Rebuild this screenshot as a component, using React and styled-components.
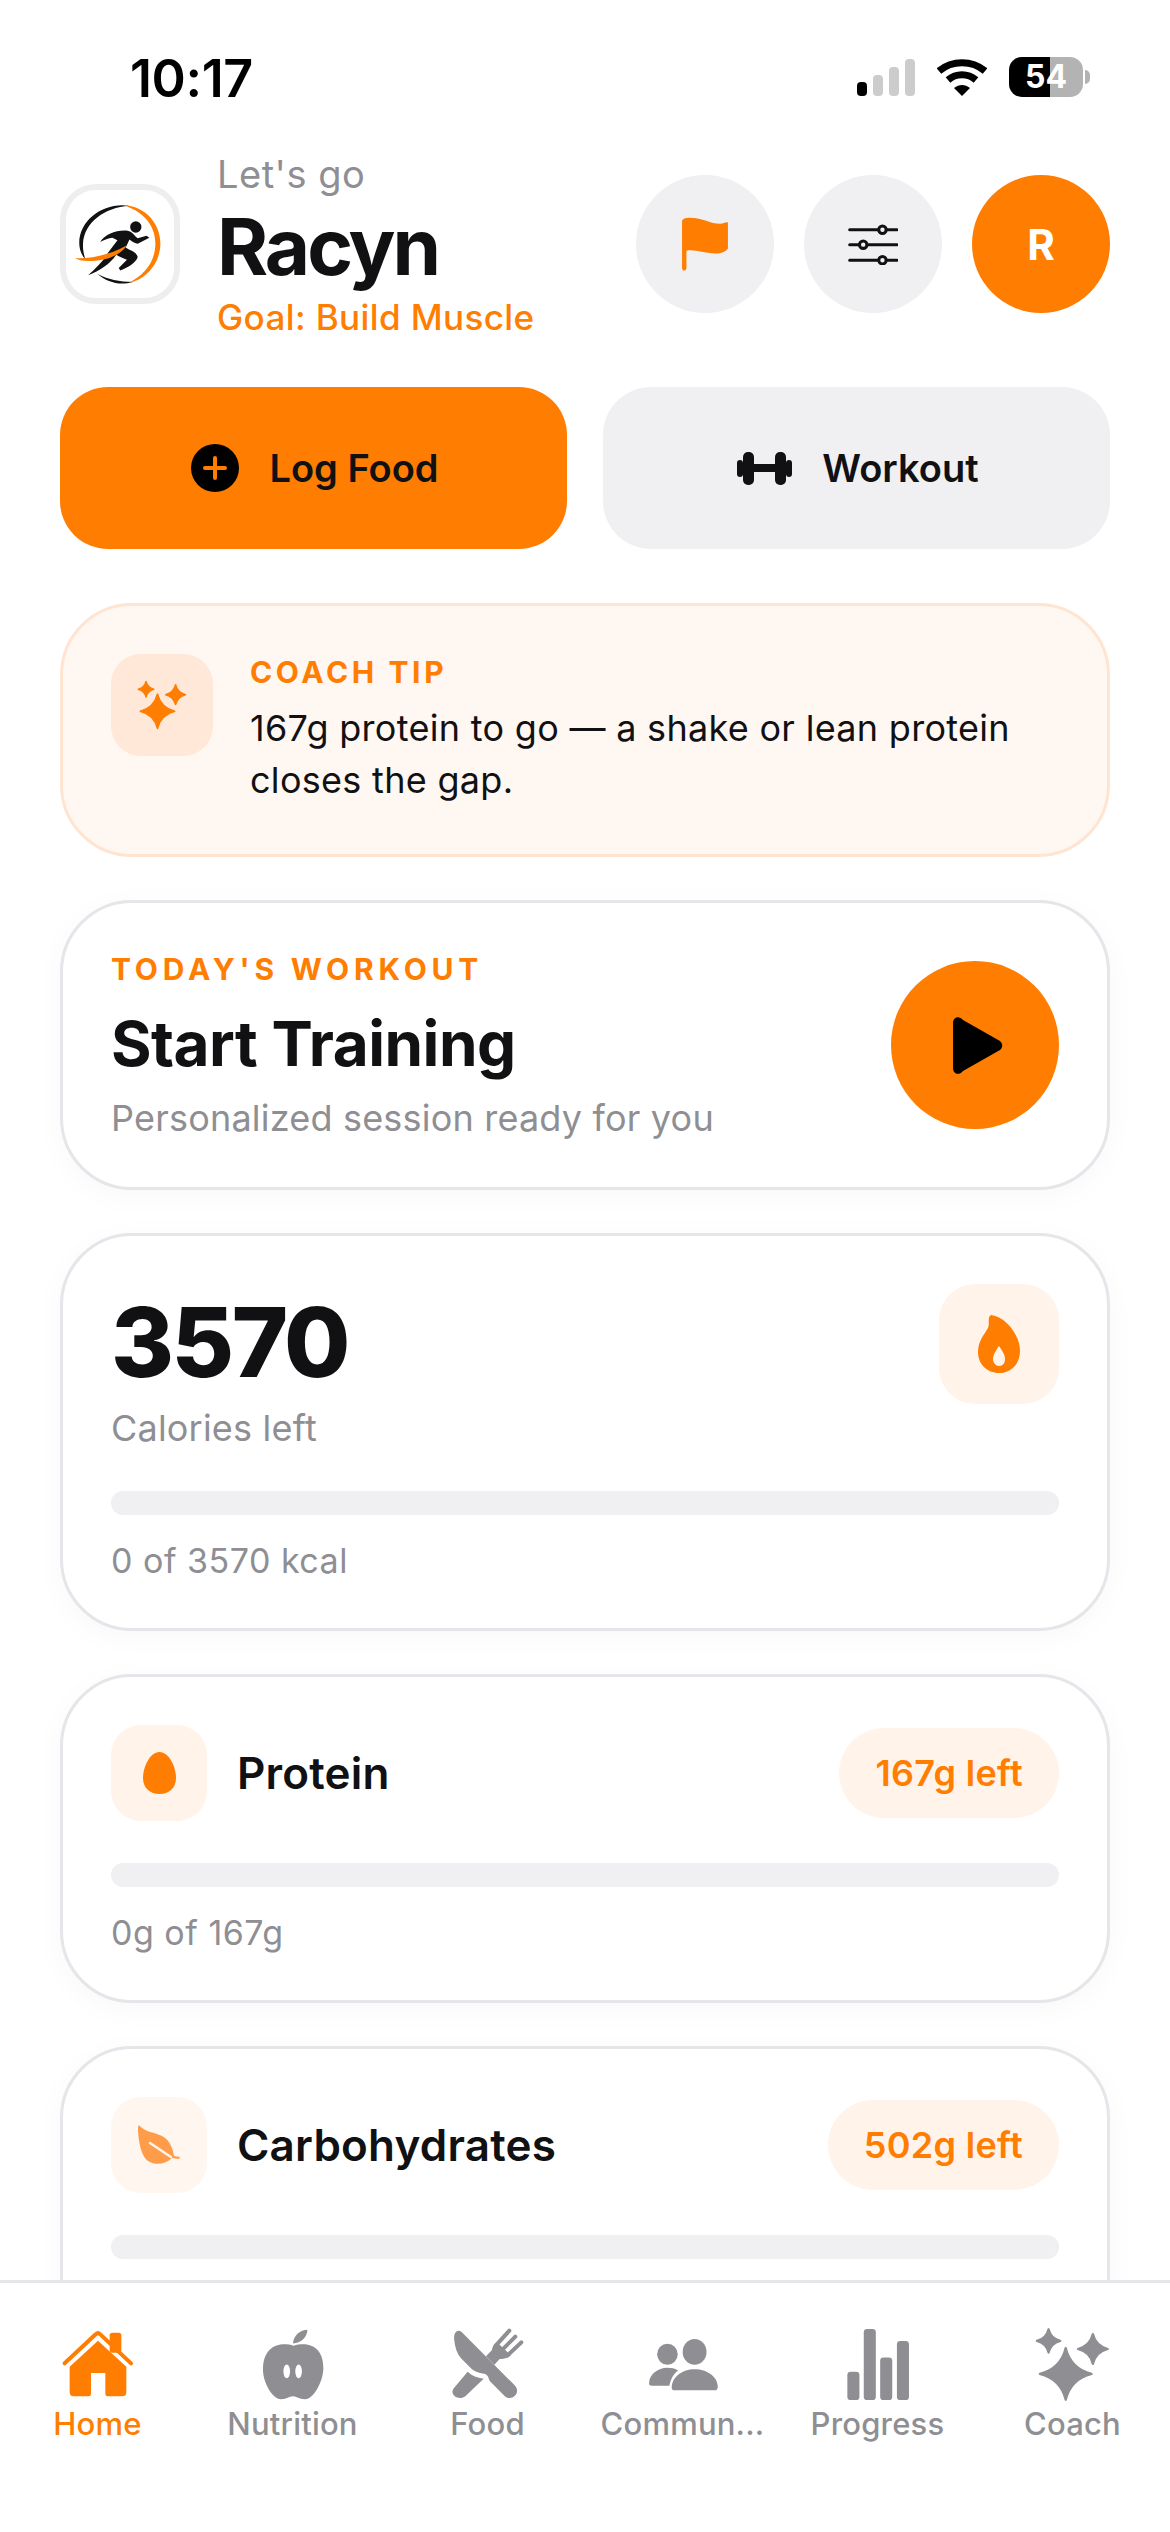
import React from 'react';
import styled, { createGlobalStyle } from 'styled-components';

const ORANGE = '#ff7d00';
const INK = '#111114';
const GRAY = '#8e8e93';
const FILL = '#f0f0f2';

const GlobalStyle = createGlobalStyle`
  html, body {
    margin: 0;
    padding: 0;
    background: #fff;
  }
  * {
    box-sizing: border-box;
  }
  body {
    font-family: Inter, "Liberation Sans", sans-serif;
    color: ${INK};
  }
`;

// four pointed star used by the coach sparkles
const star = (x, y, r) => {
  const k = r * 0.2;
  return `M${x} ${y - r}Q${x + k} ${y - k} ${x + r} ${y}Q${x + k} ${y + k} ${x} ${y + r}Q${x - k} ${y + k} ${x - r} ${y}Q${x - k} ${y - k} ${x} ${y - r}Z`;
};

function Sparkles({ size, color }) {
  return (
    <svg width={size} height={size} viewBox="1242 42 230 232" fill={color} stroke={color} strokeWidth="7" strokeLinejoin="round">
      <path d={star(1283, 85, 36)} />
      <path d={star(1420, 110, 46)} />
      <path d={star(1336, 187, 80)} />
    </svg>
  );
}

function HomeIcon() {
  return (
    <svg width="72" height="70" viewBox="95 55 216 210" fill={ORANGE}>
      <rect x="238" y="66" width="35" height="60" rx="8" />
      <path d="M103 158L196 71Q203 64 210 71L302 158" fill="none" stroke={ORANGE} strokeWidth="12" strokeLinecap="round" />
      <path d="M203 90L288 168V245Q288 257 276 257H232Q225 257 225 250V187H182V250Q182 257 175 257H130Q118 257 118 245V168Z" />
    </svg>
  );
}

function AppleIcon() {
  return (
    <svg width="62" height="73" viewBox="694 50 188 218" fill={GRAY}>
      <path d="M788 95C790 70 810 55 832 54C830 78 812 95 788 95Z" />
      <path d="M790 102C750 90 700 100 697 170C695 210 725 264 752 264C770 264 775 255 788 255C800 255 805 264 825 264C850 264 880 210 880 170C880 100 830 90 790 102Z" />
      <ellipse cx="769" cy="180" rx="10" ry="21" fill="#fff" />
      <ellipse cx="805" cy="180" rx="10" ry="21" fill="#fff" />
    </svg>
  );
}

function FoodIcon() {
  return (
    <svg width="72" height="72" viewBox="1265 52 216 216" fill={GRAY}>
      <path d="M1272 90C1268 68 1280 52 1294 64L1455 226C1472 248 1445 272 1425 258L1382 215C1372 205 1378 195 1362 189C1350 188 1338 186 1325 176L1292 143C1280 128 1274 110 1272 90Z" />
      <path d="M1271 232L1312 183C1325 195 1340 201 1360 204L1305 257C1285 272 1255 252 1271 232Z" />
      <path d="M1367 137L1385 118C1387 105 1392 100 1400 95L1442 134C1430 143 1420 146 1408 145L1392 162Z" />
      <path d="M1397 104L1437 60M1414 119L1455 78M1431 135L1473 95" fill="none" stroke={GRAY} strokeWidth="12" strokeLinecap="round" />
    </svg>
  );
}

function PeopleIcon() {
  return (
    <svg width="72" height="53" viewBox="80 78 214 160" fill={GRAY}>
      <ellipse cx="140" cy="127" rx="31" ry="32" />
      <ellipse cx="222" cy="120" rx="36" ry="39" />
      <path d="M85 212C85 190 110 168 140 168C150 168 165 170 172 176C160 185 150 200 146 222H95Q82 222 85 212Z" />
      <path d="M153 225C155 195 185 172 222 172C260 172 292 195 292 225Q292 236 282 236H162Q152 236 153 225Z" />
    </svg>
  );
}

function BarsIcon() {
  return (
    <svg width="62" height="71" viewBox="680 52 185 212" fill={GRAY}>
      <rect x="681" y="180" width="36" height="84" rx="10" />
      <rect x="730" y="52" width="36" height="212" rx="10" />
      <rect x="779" y="137" width="36" height="127" rx="10" />
      <rect x="829" y="88" width="36" height="176" rx="10" />
    </svg>
  );
}

function FlagIcon() {
  return (
    <svg width="46" height="54" viewBox="127 112 136 160" fill={ORANGE}>
      <path d="M127 125C127 118 135 114 150 114C190 114 210 132 240 132C250 132 257 125 263 128V205C255 215 245 220 225 220C190 220 165 207 140 212V265Q133 276 127 265Z" />
    </svg>
  );
}

function SlidersIcon() {
  return (
    <svg width="50" height="42" viewBox="625 128 148 124" fill="none" stroke={INK} strokeWidth="9" strokeLinecap="round">
      <path d="M630 148H770M630 192H770M630 238H770" />
      <circle cx="727" cy="148" r="11" fill={FILL} />
      <circle cx="670" cy="192" r="11" fill={FILL} />
      <circle cx="727" cy="238" r="11" fill={FILL} />
    </svg>
  );
}

function PlusBadge() {
  return (
    <svg width="48" height="48" viewBox="0 0 48 48">
      <circle cx="24" cy="24" r="24" fill="#000" />
      <path d="M24 14V34M14 24H34" stroke={ORANGE} strokeWidth="4" strokeLinecap="round" />
    </svg>
  );
}

function DumbbellIcon() {
  return (
    <svg width="55" height="33" viewBox="0 0 55 33" fill={INK}>
      <rect x="0" y="8" width="6" height="17" rx="3" />
      <rect x="6" y="0" width="11" height="33" rx="5" />
      <rect x="16" y="12" width="23" height="8" />
      <rect x="38" y="0" width="11" height="33" rx="5" />
      <rect x="49" y="8" width="6" height="17" rx="3" />
    </svg>
  );
}

function PlayIcon() {
  return (
    <svg width="50" height="57" viewBox="0 0 50 57" fill="#000">
      <path d="M0 6C0 0 6 -2 10 3L47 24C50 27 50 30 47 33L10 54C6 59 0 57 0 51Z" />
    </svg>
  );
}

function FlameIcon() {
  return (
    <svg width="42" height="58" viewBox="0 0 42 58">
      <path
        fillRule="evenodd"
        fill={ORANGE}
        d="M13 0C28 2 42 20 42 36C42 49 33 58 21 58C9 58 0 49 0 37C0 26 6 20 10 13C12 9 9 2 13 0ZM21 31C17 37 15 40 15 44C15 48 18 51 21 51C25 51 27 48 27 44C27 40 25 37 21 31Z"
      />
    </svg>
  );
}

function EggIcon() {
  return (
    <svg width="33" height="42" viewBox="0 0 33 42" fill={ORANGE}>
      <path d="M16.5 0C26 0 33 15 33 26C33 36 26 42 16.5 42C7 42 0 36 0 26C0 15 7 0 16.5 0Z" />
    </svg>
  );
}

function LeafIcon() {
  return (
    <svg width="42" height="40" viewBox="0 0 42 40" fill="#ff9c4a">
      <path d="M1 0C6 7 16 7 24 11C32 15 35 24 36 31L42 32L41 34L34 33C28 39 18 41 10 36C2 30 0 12 0 2Z" />
      <path d="M12 18L33 32" fill="none" stroke="#fff6f0" strokeWidth="2.4" strokeLinecap="round" />
    </svg>
  );
}

function RunnerLogo() {
  return (
    <svg width="108" height="108" viewBox="69 81 342 342">
      <path fill={INK} d="M270 131C190 118 110 175 111 250C111 265 116 285 130 300C124 280 122 265 123 250C127 185 190 136 270 131Z" />
      <path fill={INK} d="M168 346C200 374 240 384 280 372C240 372 200 364 168 346Z" />
      <path fill={ORANGE} d="M250 129C322 130 368 190 368 250C368 312 322 366 268 375C316 350 352 310 352 250C352 190 310 146 250 129Z" />
      <circle cx="290" cy="198" r="18" fill={INK} />
      <path fill={INK} d="M177 246C195 220 228 207 264 210C278 212 286 226 296 234L324 226L333 232L296 251C284 250 277 242 270 238L258 264C272 272 290 276 296 292C294 308 266 326 241 336L236 328L262 302C252 298 238 292 228 286C208 316 176 336 139 351C162 330 186 308 202 280L232 240L216 232C204 234 190 238 177 246Z" />
      <path fill={ORANGE} d="M97 297C150 300 210 285 262 256C236 296 180 306 140 306C120 306 106 302 97 297Z" />
    </svg>
  );
}

const TABS = [
  { label: 'Home', icon: <HomeIcon />, active: true },
  { label: 'Nutrition', icon: <AppleIcon /> },
  { label: 'Food', icon: <FoodIcon /> },
  { label: 'Commun...', icon: <PeopleIcon /> },
  { label: 'Progress', icon: <BarsIcon /> },
  { label: 'Coach', icon: <Sparkles size={75} color={GRAY} /> },
];

const MACROS = [
  { name: 'Protein', left: '167g left', note: '0g of 167g', icon: <EggIcon /> },
  { name: 'Carbohydrates', left: '502g left', note: '0g of 502g', icon: <LeafIcon />, soft: true },
];

export default function App() {
  return (
    <>
      <GlobalStyle />
      <Page>
        <StatusBar>
          <Clock>10:17</Clock>
          <StatusIcons>
            <SignalBars>
              <SignalBar $height={14} $on />
              <SignalBar $height={21} />
              <SignalBar $height={29} />
              <SignalBar $height={37} />
            </SignalBars>
            <svg width="50" height="37" viewBox="0 0 50 37" fill="none" stroke="#000" strokeWidth="7">
              <path d="M2 12C15 1 35 1 48 12" />
              <path d="M11 21C19 14 31 14 39 21" />
              <path d="M17 29L25 37L33 29C28 25 22 25 17 29Z" fill="#000" stroke="none" />
            </svg>
            <Battery>
              <BatteryLevel>54</BatteryLevel>
              <BatteryTip />
            </Battery>
          </StatusIcons>
        </StatusBar>

        <Scroll>
          <Header>
            <LogoTile>
              <RunnerLogo />
            </LogoTile>
            <Greeting>
              <Hello>Let's go</Hello>
              <UserName>Racyn</UserName>
              <Goal>Goal: Build Muscle</Goal>
            </Greeting>
            <HeaderActions>
              <RoundButton><FlagIcon /></RoundButton>
              <RoundButton><SlidersIcon /></RoundButton>
              <RoundButton $primary>R</RoundButton>
            </HeaderActions>
          </Header>

          <QuickActions>
            <QuickButton $primary><PlusBadge />Log Food</QuickButton>
            <QuickButton><DumbbellIcon />Workout</QuickButton>
          </QuickActions>

          <TipCard>
            <TipIcon>
              <Sparkles size={50} color={ORANGE} />
            </TipIcon>
            <div>
              <Eyebrow $spacing={3.6}>COACH TIP</Eyebrow>
              <TipText>167g protein to go — a shake or lean protein closes the gap.</TipText>
            </div>
          </TipCard>

          <WorkoutCard>
            <div>
              <Eyebrow $spacing={4.8}>TODAY'S WORKOUT</Eyebrow>
              <WorkoutTitle>Start Training</WorkoutTitle>
              <WorkoutNote>Personalized session ready for you</WorkoutNote>
            </div>
            <PlayButton><PlayIcon /></PlayButton>
          </WorkoutCard>

          <CaloriesCard>
            <CaloriesTop>
              <div>
                <CaloriesValue>3570</CaloriesValue>
                <Subtle>Calories left</Subtle>
              </div>
              <FlameTile><FlameIcon /></FlameTile>
            </CaloriesTop>
            <Track />
            <Note>0 of 3570 kcal</Note>
          </CaloriesCard>

          {MACROS.map((macro) => (
            <MacroCard key={macro.name}>
              <MacroRow>
                <MacroTile $soft={macro.soft}>{macro.icon}</MacroTile>
                <MacroName>{macro.name}</MacroName>
                <LeftPill>{macro.left}</LeftPill>
              </MacroRow>
              <Track />
              <Note>{macro.note}</Note>
            </MacroCard>
          ))}
        </Scroll>

        <TabBar>
          {TABS.map((tab) => (
            <Tab key={tab.label} $active={tab.active}>
              <TabIcon>{tab.icon}</TabIcon>
              {tab.label}
            </Tab>
          ))}
        </TabBar>
      </Page>
    </>
  );
}

const Page = styled.div`
  width: 1170px;
  height: 2532px;
  display: flex;
  flex-direction: column;
  overflow: hidden;
  background: #fff;
`;

const StatusBar = styled.div`
  height: 154px;
  flex: none;
  display: flex;
  justify-content: space-between;
  align-items: flex-start;
  padding: 47px 80px 0 130px;
`;

const Clock = styled.span`
  font-size: 52px;
  line-height: 64px;
  font-weight: 600;
  letter-spacing: -0.4px;
  color: #000;
`;

const StatusIcons = styled.div`
  display: flex;
  align-items: flex-end;
  gap: 22px;
  margin-top: 10px;
`;

const SignalBars = styled.div`
  display: flex;
  align-items: flex-end;
  gap: 6px;
`;

const SignalBar = styled.i`
  display: block;
  width: 10px;
  height: ${({ $height }) => $height}px;
  border-radius: 4px;
  background: ${({ $on }) => ($on ? '#000' : '#ccc')};
`;

const Battery = styled.div`
  display: flex;
  align-items: center;
  gap: 2px;
  margin-bottom: -1px;
`;

const BatteryLevel = styled.div`
  width: 74px;
  height: 40px;
  border-radius: 13px;
  background: linear-gradient(90deg, #000 55%, #b3b3b3 55%);
  color: #fff;
  font-size: 32px;
  line-height: 40px;
  font-weight: 700;
  text-align: center;
`;

const BatteryTip = styled.i`
  display: block;
  width: 5px;
  height: 14px;
  border-radius: 0 5px 5px 0;
  background: #b3b3b3;
`;

const Scroll = styled.main`
  flex: 1;
  min-height: 0;
  overflow: hidden;
  padding: 0 60px;
  display: flex;
  flex-direction: column;
  gap: 43px;
`;

const Header = styled.header`
  height: 180px;
  flex: none;
  display: flex;
  align-items: center;
  margin-bottom: 10px;
`;

const LogoTile = styled.div`
  width: 120px;
  height: 120px;
  flex: none;
  display: flex;
  align-items: center;
  justify-content: center;
  border: 6px solid #eeeeef;
  border-radius: 36px;
  background: #fff;
`;

const Greeting = styled.div`
  margin-left: 37px;
  flex: 1;
`;

const Hello = styled.div`
  margin-bottom: 3px;
  font-size: 38px;
  line-height: 46px;
  letter-spacing: 0.5px;
  color: ${GRAY};
`;

const UserName = styled.div`
  font-size: 78px;
  line-height: 94px;
  font-weight: 700;
  letter-spacing: -3px;
  color: ${INK};
`;

const Goal = styled.div`
  margin-top: 3px;
  font-size: 35px;
  line-height: 40px;
  font-weight: 500;
  letter-spacing: 0.4px;
  color: ${ORANGE};
`;

const HeaderActions = styled.div`
  display: flex;
  gap: 30px;
`;

const RoundButton = styled.button`
  width: 138px;
  height: 138px;
  padding: 0;
  border: 0;
  border-radius: 50%;
  display: flex;
  align-items: center;
  justify-content: center;
  background: ${({ $primary }) => ($primary ? ORANGE : FILL)};
  color: #fff;
  font-family: inherit;
  font-size: 42px;
  font-weight: 700;
`;

const QuickActions = styled.div`
  flex: none;
  display: grid;
  grid-template-columns: 1fr 1fr;
  gap: 36px;
`;

const QuickButton = styled.button`
  height: 162px;
  border: 0;
  padding: 0 0 0 3px;
  border-radius: 48px;
  display: flex;
  align-items: center;
  justify-content: center;
  gap: 30px;
  background: ${({ $primary }) => ($primary ? ORANGE : FILL)};
  color: ${INK};
  font-family: inherit;
  font-size: 38px;
  font-weight: 600;
`;

const TipCard = styled.section`
  flex: none;
  height: 254px;
  margin-top: 11px;
  padding: 48px 48px 0;
  display: flex;
  gap: 37px;
  border: 3px solid #ffe5d1;
  border-radius: 72px;
  background: #fff7f1;
`;

const TipIcon = styled.div`
  width: 102px;
  height: 102px;
  flex: none;
  display: flex;
  align-items: center;
  justify-content: center;
  border-radius: 30px;
  background: #ffe8d8;
`;

const Eyebrow = styled.div`
  font-size: 30px;
  line-height: 36px;
  font-weight: 700;
  letter-spacing: ${({ $spacing }) => $spacing}px;
  color: ${ORANGE};
`;

const TipText = styled.p`
  margin: 12px 0 0;
  font-size: 36px;
  line-height: 52px;
  letter-spacing: 0.3px;
  color: ${INK};
`;

const Card = styled.section`
  flex: none;
  border: 3px solid #e5e5ea;
  border-radius: 72px;
  background: #fff;
  box-shadow: 0 6px 30px rgba(0, 0, 0, 0.03);
`;

const WorkoutCard = styled(Card)`
  height: 290px;
  padding: 0 48px;
  display: flex;
  align-items: center;
  justify-content: space-between;
`;

const WorkoutTitle = styled.div`
  margin-top: 19px;
  font-size: 62px;
  line-height: 76px;
  font-weight: 700;
  letter-spacing: -0.5px;
`;

const Subtle = styled.div`
  margin-top: 6px;
  font-size: 36px;
  line-height: 44px;
  letter-spacing: 0.2px;
  color: ${GRAY};
`;

const WorkoutNote = styled(Subtle)`
  margin-top: 14px;
`;

const PlayButton = styled.div`
  width: 168px;
  height: 168px;
  border-radius: 50%;
  display: flex;
  align-items: center;
  justify-content: center;
  padding-left: 6px;
  background: ${ORANGE};
`;

const CaloriesCard = styled(Card)`
  height: 398px;
  padding: 48px 48px 0;
`;

const CaloriesTop = styled.div`
  display: flex;
  justify-content: space-between;
  align-items: flex-start;
  height: 207px;
`;

const CaloriesValue = styled.div`
  font-size: 96px;
  line-height: 116px;
  font-weight: 800;
  letter-spacing: -2.5px;
`;

const FlameTile = styled.div`
  width: 120px;
  height: 120px;
  display: flex;
  align-items: center;
  justify-content: center;
  border-radius: 36px;
  background: #fff3ea;
`;

const Track = styled.div`
  height: 24px;
  border-radius: 12px;
  background: ${FILL};
`;

const Note = styled.div`
  margin-top: 26px;
  font-size: 34px;
  line-height: 40px;
  letter-spacing: 0.5px;
  color: ${GRAY};
`;

const MacroCard = styled(Card)`
  height: 329px;
  padding: 48px 48px 0;
`;

const MacroRow = styled.div`
  display: flex;
  align-items: center;
  height: 96px;
  margin-bottom: 42px;
`;

const MacroTile = styled.div`
  width: 96px;
  height: 96px;
  display: flex;
  align-items: center;
  justify-content: center;
  border-radius: 30px;
  background: ${({ $soft }) => ($soft ? '#fff6f0' : '#fff3ea')};
`;

const MacroName = styled.div`
  flex: 1;
  margin-left: 30px;
  font-size: 44px;
  font-weight: 600;
  letter-spacing: 0.2px;
`;

const LeftPill = styled.div`
  height: 90px;
  padding: 0 36px;
  display: flex;
  align-items: center;
  border-radius: 45px;
  background: #fff3ea;
  color: ${ORANGE};
  font-size: 36px;
  font-weight: 600;
  letter-spacing: 0.3px;
`;

const TabBar = styled.nav`
  height: 252px;
  flex: none;
  display: grid;
  grid-template-columns: repeat(6, 1fr);
  padding-top: 42px;
  border-top: 3px solid #e5e5ea;
  background: #fff;
`;

const Tab = styled.div`
  display: flex;
  flex-direction: column;
  align-items: center;
  font-size: 31px;
  line-height: 36px;
  font-weight: 500;
  letter-spacing: 0.2px;
  color: ${({ $active }) => ($active ? ORANGE : GRAY)};
`;

const TabIcon = styled.div`
  height: 78px;
  margin-bottom: 3px;
  display: flex;
  align-items: center;
  justify-content: center;
`;
